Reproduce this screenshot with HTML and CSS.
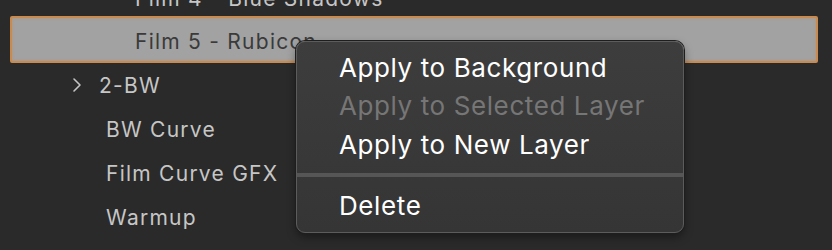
FILE: index.html
```html
<!DOCTYPE html>
<html>
<head>
<meta charset="utf-8">
<link rel="stylesheet" href="styles.css">
</head>
<body>
<div class="panel">
  <ul class="tree">
    <li class="row indent2 first">Film 4 - Blue Shadows</li>
    <li class="row selected">Film 5 - Rubicon</li>
    <li class="row group">
      <svg class="chev" width="10" height="16" viewBox="0 0 10 16"><path d="M2 2 L8 8 L2 14" fill="none" stroke="#c4c4c4" stroke-width="1.6" stroke-linecap="round" stroke-linejoin="round"/></svg>
      <span>2-BW</span>
    </li>
    <li class="row indent1">BW Curve</li>
    <li class="row indent1">Film Curve GFX</li>
    <li class="row indent1">Warmup</li>
  </ul>
  <div class="menu">
    <div class="item">Apply to Background</div>
    <div class="item disabled">Apply to Selected Layer</div>
    <div class="item">Apply to New Layer</div>
    <div class="sep"></div>
    <div class="item">Delete</div>
  </div>
</div>
</body>
</html>
```
FILE: styles.css
```css
html, body {
  margin: 0;
  padding: 0;
  background: #2a2a2a;
  overflow: hidden;
}
.panel {
  position: relative;
  width: 832px;
  height: 250px;
  overflow: hidden;
  font-family: Inter, "Liberation Sans", sans-serif;
}
.tree {
  list-style: none;
  margin: -22px 0 0 0;
  padding: 0;
}
.row {
  height: 44px;
  display: flex;
  align-items: center;
  font-size: 21px;
  letter-spacing: 1.25px;
  color: #c6c6c6;
  box-sizing: border-box;
  white-space: nowrap;
}
.row.first { height: 41px; }
.indent2 { padding-left: 135px; }
.indent1 { padding-left: 106px; }
.group { padding-left: 72px; }
.group .chev { margin-right: 17px; }
.selected {
  height: 47px;
  margin: -3px 14px 0 10px;
  padding: 3px 0 0 123px;
  border: 2px solid #c98a4f;
  border-radius: 2px;
  background: #a2a2a2;
  box-shadow: inset 0 0 3px rgba(200, 140, 80, 0.6);
  color: #3a3a3a;
}
.menu {
  position: absolute;
  left: 296px;
  top: 41px;
  width: 388px;
  height: 192px;
  box-sizing: border-box;
  padding: 6px 0 7px 0;
  background: linear-gradient(#3d3d3d, #353535);
  border: 1px solid #5c5c5c;
  border-radius: 9px;
  box-shadow: 0 0 0 1px #1e1e1e, 0 4px 10px rgba(0,0,0,0.4);
}
.item {
  height: 38.5px;
  display: flex;
  align-items: center;
  padding-left: 42px;
  font-size: 26px;
  letter-spacing: 0.6px;
  color: #ffffff;
  white-space: nowrap;
}
.item.disabled { color: #767676; }
.sep {
  height: 4px;
  margin: 9.5px 0 9.5px 0;
  background: #565656;
}
```
